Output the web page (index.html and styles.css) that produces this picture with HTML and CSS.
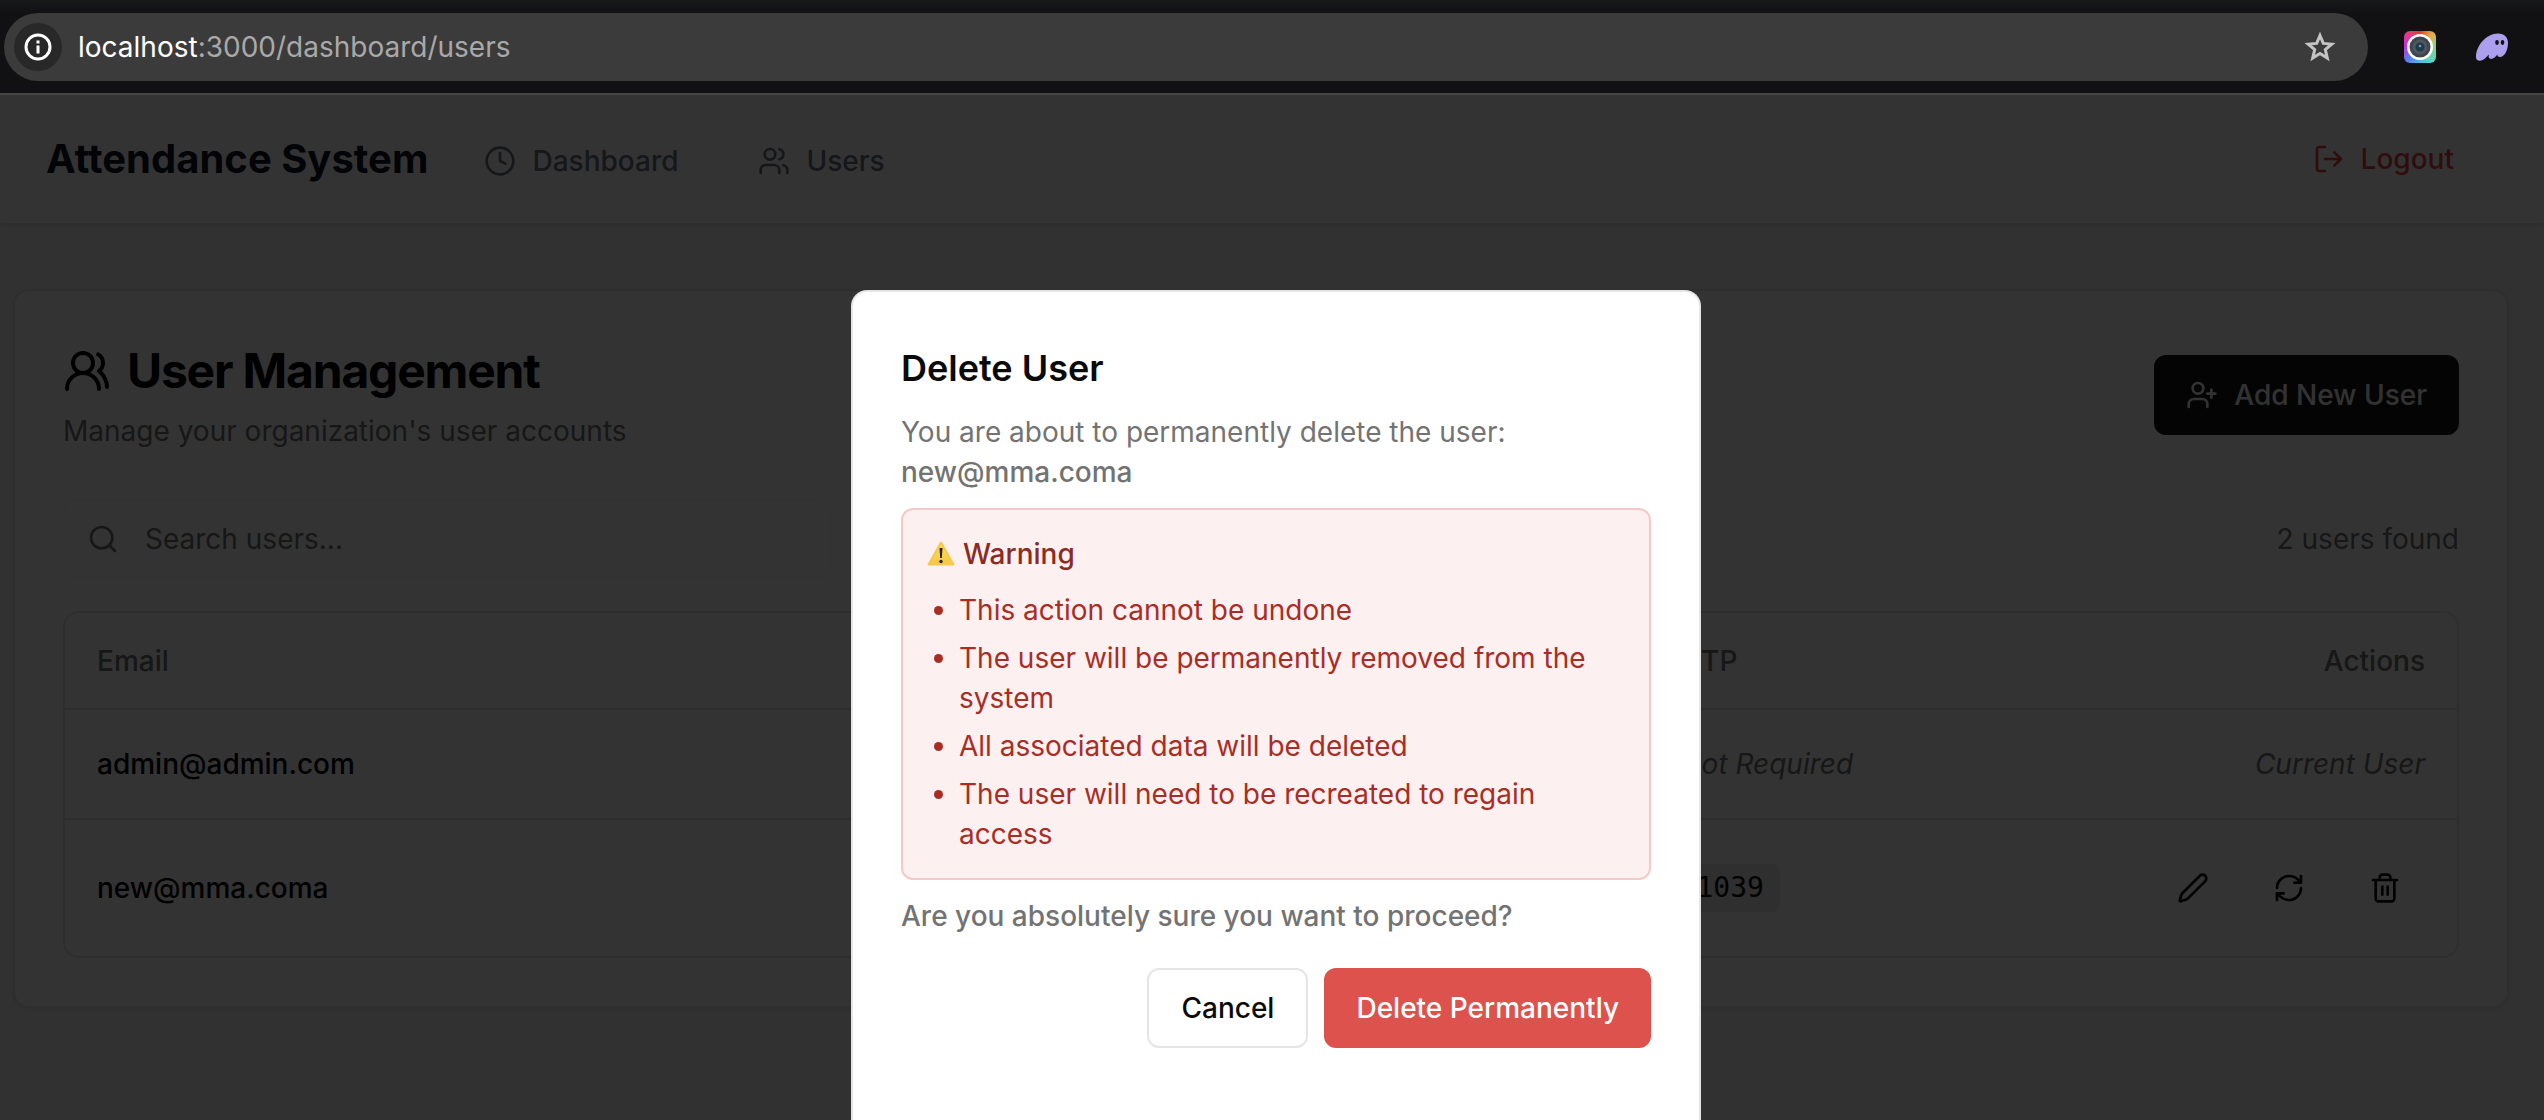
FILE: index.html
```html
<!DOCTYPE html>
<html lang="en">
<head>
  <meta charset="utf-8">
  <meta name="viewport" content="width=device-width, initial-scale=1">
  <title>Attendance System</title>
  <link rel="stylesheet" href="styles.css">
</head>
<body>
  <div class="toolbar">
    <div class="address">
      <button class="address-info" type="button" aria-label="Site information">
        <svg width="28" height="28" viewBox="0 0 28 28" fill="none" stroke="currentColor" stroke-width="3"><circle cx="14" cy="14" r="12"/><path d="M14 12.5V20.500M14 7.500v3"/></svg>
      </button>
      <div class="address-url"><span class="address-host">localhost</span>:3000/dashboard/users</div>
      <button class="address-star" type="button" aria-label="Bookmark">
        <svg width="32" height="32" viewBox="0 0 32 32" fill="none" stroke="currentColor" stroke-width="3"><path d="M16 4.500l3.300 7.900 8.500.700-6.500 5.500 2 8.400L16 22.500 8.700 27l2-8.400-6.500-5.500 8.500-.700z"/></svg>
      </button>
    </div>
    <div class="extensions">
      <button class="extension camera" type="button" aria-label="Camera extension">
        <svg width="32" height="32" viewBox="0 0 32 32"><circle cx="16" cy="16" r="13" fill="#fff"/><circle cx="16" cy="16" r="10.500" fill="#43454c"/><circle cx="16" cy="16" r="7.500" fill="#4d5661"/><circle cx="16" cy="16" r="4.500" fill="#1f3b4f"/><circle cx="16" cy="15" r="1.300" fill="#8296a8"/></svg>
      </button>
      <button class="extension" type="button" aria-label="Wallet extension">
        <svg width="32" height="32" viewBox="0 0 32 32"><path d="M0 26C0 15 10 2.500 22 2.500c6.500 0 10 4 10 9.500 0 7-3.500 14-8 14-2 0-2.800-.900-2.600-2.400-2 2.700-4 4.400-6.200 4.400-2.300 0-3-1.500-2.400-4.400C9.800 27.500 7 29.800 3.800 29.800 1.300 29.800 0 28.500 0 26z" fill="#ab9fee"/><ellipse cx="21" cy="11.500" rx="1.800" ry="2.400" fill="#111113"/><ellipse cx="26.500" cy="11.500" rx="1.800" ry="2.400" fill="#111113"/></svg>
      </button>
    </div>
  </div>

  <div class="app">
    <header class="header">
      <div class="header-left">
        <span class="brand">Attendance System</span>
        <nav class="nav">
          <a class="nav-link" href="#dashboard">
            <svg class="icon" viewBox="0 0 24 24"><circle cx="12" cy="12" r="10"/><path d="M12 6v6l4 2"/></svg>
            Dashboard
          </a>
          <a class="nav-link" href="#users">
            <svg class="icon" viewBox="0 0 24 24"><path d="M16 21v-2a4 4 0 0 0-4-4H6a4 4 0 0 0-4 4v2"/><circle cx="9" cy="7" r="4"/><path d="M22 21v-2a4 4 0 0 0-3-3.870M16 3.130a4 4 0 0 1 0 7.750"/></svg>
            Users
          </a>
        </nav>
      </div>
      <button class="logout" type="button">
        <svg class="icon" viewBox="0 0 24 24"><path d="M9 21H5a2 2 0 0 1-2-2V5a2 2 0 0 1 2-2h4M16 17l5-5-5-5M21 12H9"/></svg>
        Logout
      </button>
    </header>

    <main class="main">
      <section class="card">
        <div class="card-head">
          <div>
            <h1 class="title">
              <svg class="icon icon-large" viewBox="0 0 24 24"><path d="M18 21a8 8 0 0 0-16 0"/><circle cx="10" cy="8" r="5"/><path d="M22 20c0-3.370-2-6.500-4-8a5 5 0 0 0-.450-8.300"/></svg>
              User Management
            </h1>
            <p class="subtitle">Manage your organization's user accounts</p>
          </div>
          <button class="button button-primary" type="button">
            <svg class="icon" viewBox="0 0 24 24"><path d="M16 21v-2a4 4 0 0 0-4-4H6a4 4 0 0 0-4 4v2"/><circle cx="9" cy="7" r="4"/><path d="M19 8v6M22 11h-6"/></svg>
            Add New User
          </button>
        </div>

        <div class="filter">
          <label class="search">
            <svg class="icon" viewBox="0 0 24 24"><circle cx="11" cy="11" r="8"/><path d="m21 21-4.300-4.300"/></svg>
            <input class="search-input" type="text" placeholder="Search users..." aria-label="Search users">
          </label>
          <span class="count">2 users found</span>
        </div>

        <div class="table-frame">
          <table class="table">
            <thead>
              <tr><th class="col-email">Email</th><th>OTP</th><th class="right">Actions</th></tr>
            </thead>
            <tbody>
              <tr>
                <td class="email">admin@admin.com</td>
                <td class="note">Not Required</td>
                <td class="note right">Current User</td>
              </tr>
              <tr>
                <td class="email">new@mma.coma</td>
                <td><code class="otp">1039</code></td>
                <td>
                  <div class="actions">
                    <button class="action" type="button" aria-label="Edit"><svg class="icon" viewBox="0 0 24 24"><path d="M21.174 6.812a1 1 0 0 0-3.986-3.987L3.842 16.174a2 2 0 0 0-.5.83l-1.321 4.352a.5.5 0 0 0 .623.622l4.353-1.320a2 2 0 0 0 .830-.497z"/></svg></button>
                    <button class="action" type="button" aria-label="Reset"><svg class="icon" viewBox="0 0 24 24"><path d="M3 12a9 9 0 0 1 9-9 9.750 9.750 0 0 1 6.740 2.740L21 8M21 3v5h-5M21 12a9 9 0 0 1-9 9 9.750 9.750 0 0 1-6.740-2.740L3 16M8 16H3v5"/></svg></button>
                    <button class="action" type="button" aria-label="Delete"><svg class="icon" viewBox="0 0 24 24"><path d="M3 6h18M19 6v14c0 1-1 2-2 2H7c-1 0-2-1-2-2V6M8 6V4c0-1 1-2 2-2h4c1 0 2 1 2 2v2M10 11v6M14 11v6"/></svg></button>
                  </div>
                </td>
              </tr>
            </tbody>
          </table>
        </div>
      </section>
    </main>

    <div class="overlay">
      <div class="dialog" role="dialog" aria-modal="true" aria-labelledby="dialog-title">
        <h2 class="dialog-title" id="dialog-title">Delete User</h2>
        <p class="dialog-text">You are about to permanently delete the user: <strong class="strong">new@mma.coma</strong></p>
        <div class="warning">
          <p class="warning-title">
            <svg width="28" height="28" viewBox="0 0 28 28"><defs><linearGradient id="sign" x1="0" y1="0" x2="0" y2="1"><stop offset="0" stop-color="#fbe05a"/><stop offset="1" stop-color="#f6c744"/></linearGradient></defs><path d="M14 2.500 26.500 24.500H1.500z" fill="url(#sign)" stroke="#f6c94c" stroke-width="2" stroke-linejoin="round"/><path d="M12.500 8h3l-.700 10h-1.600z" fill="#26221a"/><circle cx="14" cy="21.500" r="1.700" fill="#26221a"/></svg>
            Warning
          </p>
          <ul class="warning-list">
            <li>This action cannot be undone</li>
            <li>The user will be permanently removed from the system</li>
            <li>All associated data will be deleted</li>
            <li>The user will need to be recreated to regain access</li>
          </ul>
        </div>
        <p class="dialog-text strong">Are you absolutely sure you want to proceed?</p>
        <div class="dialog-actions">
          <button class="button button-outline" type="button">Cancel</button>
          <button class="button button-danger" type="button">Delete Permanently</button>
        </div>
      </div>
    </div>
  </div>
</body>
</html>
```
FILE: styles.css
```css
* {
  box-sizing: border-box;
}

body {
  margin: 0;
  min-height: 100vh;
  display: flex;
  flex-direction: column;
  overflow: hidden;
  background: #111113;
  color: #0a0a0a;
  font-family: Inter, "Liberation Sans", sans-serif;
  font-size: 28px;
  line-height: 40px;
}

h1, h2, p, ul {
  margin: 0;
}

button {
  display: flex;
  align-items: center;
  justify-content: center;
  padding: 0;
  border: 0;
  background: none;
  color: inherit;
  font: inherit;
}

.icon {
  flex: none;
  width: 32px;
  height: 32px;
  fill: none;
  stroke: currentColor;
  stroke-width: 2;
  stroke-linecap: round;
  stroke-linejoin: round;
}

.icon-large {
  width: 48px;
  height: 48px;
}

/* Browser toolbar */

.toolbar {
  display: flex;
  align-items: center;
  gap: 36px;
  padding: 13px 36px 12px 4px;
  border-bottom: 2px solid #474747;
  background: linear-gradient(#18191b, #111113 13px);
}

.address {
  flex: 1;
  display: flex;
  align-items: center;
  gap: 16px;
  height: 68px;
  padding: 0 32px 0 10px;
  border-radius: 34px;
  background: #3b3b3b;
}

.address-info {
  width: 48px;
  height: 48px;
  border-radius: 50%;
  background: #282828;
  color: #fff;
}

.address-url {
  flex: 1;
  color: #a9a9a9;
}

.address-host {
  color: #fff;
}

.address-star {
  color: #c4c4c4;
}

.extensions {
  display: flex;
  gap: 40px;
}

.extension {
  width: 32px;
  height: 32px;
}

.camera {
  border-radius: 6px;
  background: conic-gradient(from 0deg, #d6422b, #e8b04a 45deg, #7fd48a 90deg, #5cd6c0 140deg, #4fb0ea 190deg, #5a7cf0 225deg, #c32fe0 270deg, #e5388a 315deg, #d6422b);
}

/* Application */

.app {
  position: relative;
  flex: 1;
  background: #f3f4f6;
}

.header {
  display: flex;
  align-items: center;
  justify-content: space-between;
  height: 128px;
  padding: 0 58px 0 46px;
  background: #fff;
  box-shadow: 0 2px 4px rgba(0, 0, 0, 0.1);
}

.header-left {
  display: flex;
  align-items: center;
  gap: 56px;
}

.brand {
  color: #111827;
  font-size: 40px;
  font-weight: 700;
  line-height: 56px;
}

.nav {
  display: flex;
  gap: 80px;
}

.nav-link {
  display: flex;
  align-items: center;
  gap: 16px;
  padding-top: 4px;
  color: #6b7280;
  font-weight: 500;
  text-decoration: none;
}

.logout {
  gap: 16px;
  padding: 16px 32px;
  color: #ef4444;
  font-weight: 500;
}

.main {
  padding: 66px 35px 0 13px;
}

.card {
  padding: 48px;
  border: 2px solid #e5e5e5;
  border-radius: 16px;
  background: #fff;
  box-shadow: 0 2px 4px rgba(0, 0, 0, 0.06);
}

.card-head {
  display: flex;
  align-items: center;
  justify-content: space-between;
  height: 112px;
}

.title {
  display: flex;
  align-items: center;
  gap: 16px;
  color: #000;
  font-size: 48px;
  font-weight: 700;
  letter-spacing: -0.025em;
  line-height: 64px;
}

.subtitle,
.count {
  color: #737373;
}

.subtitle {
  margin-top: 8px;
}

.button {
  gap: 16px;
  height: 80px;
  padding: 0 32px;
  border-radius: 12px;
  font-weight: 500;
}

.button-primary {
  background: #171717;
  color: #fafafa;
}

.button-outline {
  border: 2px solid #e5e5e5;
  background: #fff;
}

.button-danger {
  background: #dd524c;
  color: #fff;
}

.filter {
  display: flex;
  align-items: center;
  justify-content: space-between;
  margin: 48px 0 32px;
}

.search {
  display: flex;
  align-items: center;
  gap: 26px;
  width: 768px;
  height: 80px;
  padding: 0 22px;
  border: 2px solid #f8f8f8;
  border-radius: 12px;
  color: #737373;
}

.search-input {
  flex: 1;
  min-width: 0;
  padding: 0;
  border: 0;
  outline: 0;
  background: none;
  color: inherit;
  font: inherit;
}

.search-input::placeholder {
  color: inherit;
  opacity: 1;
}

.table-frame {
  border: 2px solid #e5e5e5;
  border-radius: 16px;
}

.table {
  width: 100%;
  table-layout: fixed;
  border-spacing: 0;
}

.table th,
.table td {
  padding: 32px;
  text-align: left;
}

.table th {
  padding: 28px 32px 27px;
  color: #737373;
  font-weight: 500;
}

.table tr:not(:last-child) td,
.table th {
  border-bottom: 2px solid #e5e5e5;
}

.table tr:first-child td {
  padding: 34px 32px;
}

.table .col-email {
  width: 66.2%;
}

.table .right {
  text-align: right;
}

.table .email {
  color: #000;
  font-weight: 500;
}

.table .note {
  color: #737373;
  font-style: italic;
}

.otp {
  display: inline-block;
  padding: 4px 16px;
  border-radius: 8px;
  background: #e8e8e8;
  color: #0a0a0a;
  font-family: "DejaVu Sans Mono", monospace;
  font-size: 28px;
}

.actions {
  display: flex;
  justify-content: flex-end;
  gap: 16px;
}

.action {
  width: 80px;
  height: 72px;
}

/* Dialog */

.overlay {
  position: absolute;
  inset: 0;
  display: flex;
  justify-content: center;
  padding: 195px 0 0 8px;
  background: rgba(0, 0, 0, 0.8);
}

.dialog {
  width: 850px;
  padding: 48px;
  border: 2px solid #e5e5e5;
  border-bottom: 0;
  border-radius: 16px 16px 0 0;
  background: #fff;
}

.dialog-title {
  margin-bottom: 16px;
  font-size: 36px;
  font-weight: 600;
  line-height: 56px;
}

.dialog-text {
  color: #737373;
}

.strong {
  font-weight: 500;
}

.warning {
  margin: 16px 0;
  padding: 24px;
  border: 2px solid #f6c9c9;
  border-radius: 12px;
  background: #fcf1f0;
  color: #a92d25;
}

.warning-title {
  display: flex;
  align-items: center;
  gap: 8px;
  margin-bottom: 16px;
  color: #8d2a23;
  font-weight: 500;
}

.warning-list {
  display: flex;
  flex-direction: column;
  gap: 8px;
  padding-left: 32px;
}

.dialog-actions {
  display: flex;
  justify-content: flex-end;
  gap: 16px;
  margin-top: 32px;
}
```
